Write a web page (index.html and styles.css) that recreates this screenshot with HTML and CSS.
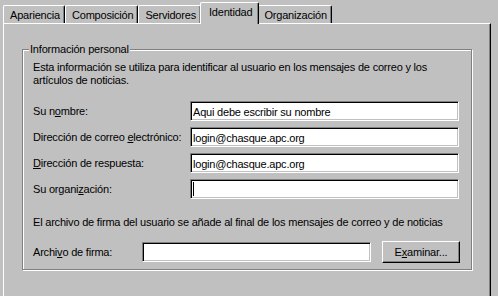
FILE: index.html
```html
<html lang="es">
<head>
  <meta charset="UTF-8">
  <meta name="viewport" content="width=device-width, initial-scale=1.0">
  <title>Identidad</title>
  <link rel="stylesheet" href="styles.css">
</head>
<body>
  <div class="tabs">
    <div class="tab">Apariencia</div>
    <div class="tab">Composición</div>
    <div class="tab">Servidores</div>
    <div class="tab selected">Identidad</div>
    <div class="tab">Organización</div>
  </div>

  <div class="panel">
    <fieldset class="group">
      <legend>Información personal</legend>
      <p class="info">Esta información se utiliza para identificar al usuario en los mensajes de correo y los<br>artículos de noticias.</p>

      <div class="fields">
        <label for="nombre">Su n<u>o</u>mbre:</label>
        <input type="text" id="nombre" value="Aqui debe escribir su nombre">

        <label for="email">Dirección de correo <u>e</u>lectrónico:</label>
        <input type="text" id="email" value="login@chasque.apc.org">

        <label for="respuesta"><u>D</u>irección de respuesta:</label>
        <input type="text" id="respuesta" value="login@chasque.apc.org">

        <label for="organizacion">Su organi<u>z</u>ación:</label>
        <div class="field">
          <input type="text" id="organizacion">
          <span class="caret"></span>
        </div>
      </div>

      <p class="note">El archivo de firma del usuario se añade al final de los mensajes de correo y de noticias</p>

      <div class="firma">
        <label for="firma">Archi<u>v</u>o de firma:</label>
        <input type="text" id="firma">
        <button type="button">E<u>x</u>aminar...</button>
      </div>
    </fieldset>
  </div>
</body>
</html>
```

FILE: styles.css
```css
body {
  margin: 0;
  background: #c0c0c0;
  font-family: "Liberation Sans", Arial, sans-serif;
  font-size: 11px;
  line-height: 13px;
  letter-spacing: -0.2px;
  color: #000;
  overflow: hidden;
}
u {
  text-decoration-thickness: 1px;
  text-underline-offset: 1px;
}

/* pestañas */
.tabs {
  display: flex;
  align-items: flex-end;
  height: 23px;
  padding-left: 3px;
}
.tab {
  height: 18px;
  box-sizing: border-box;
  padding: 3px 4px 0 6px;
  border-top: 1px solid #fff;
  border-left: 1px solid #fff;
  border-right: 1px solid #000;
  border-radius: 2px 2px 0 0;
  box-shadow: inset -1px 0 #808080;
  white-space: nowrap;
}
.tab.selected {
  position: relative;
  height: 22px;
  margin: 0 -2px -1px -1px;
  padding: 3px 6px 0 8px;
  background: #c0c0c0;
}

/* panel */
.panel {
  width: 488px;
  height: 273px;
  box-sizing: border-box;
  margin-left: 3px;
  padding-top: 19px;
  border-top: 1px solid #fff;
  border-left: 1px solid #fff;
  border-right: 1px solid #000;
  box-shadow: inset -1px 0 #808080;
}
.group {
  margin: 0 18px;
  padding: 5px 10px 6px 10px;
  border: 1px solid #808080;
  box-shadow: inset 1px 1px #fff, 1px 1px #fff;
}
.group legend {
  margin-left: -4px;
  padding: 0 1px;
  background: #c0c0c0;
}
.info {
  margin: 0;
}
.fields {
  display: grid;
  grid-template-columns: 157px 269px;
  grid-auto-rows: 20px;
  row-gap: 6px;
  align-items: center;
  margin-top: 14px;
}
.field {
  position: relative;
  height: 20px;
}
.field input {
  width: 100%;
}
.caret {
  position: absolute;
  left: 3px;
  top: 3px;
  width: 1px;
  height: 14px;
  background: #000;
}
.note {
  margin: 17px 0 0 0;
}
.firma {
  display: flex;
  align-items: center;
  height: 22px;
  margin-top: 12px;
}
.firma label {
  width: 109px;
}
.firma input {
  width: 229px;
  margin-right: 11px;
}

input {
  height: 20px;
  box-sizing: border-box;
  margin: 0;
  padding: 1px 2px 0 2px;
  font: inherit;
  letter-spacing: inherit;
  background: #fff;
  border: 1px solid;
  border-color: #808080 #fff #fff #808080;
  box-shadow: inset 1px 1px #000, inset -1px -1px #c0c0c0;
  outline: none;
}
button {
  width: 78px;
  height: 22px;
  box-sizing: border-box;
  margin: 0;
  padding: 0;
  font: inherit;
  letter-spacing: inherit;
  color: #000;
  background: #c0c0c0;
  border: 1px solid;
  border-color: #fff #000 #000 #fff;
  box-shadow: inset -1px -1px #808080;
}
```
